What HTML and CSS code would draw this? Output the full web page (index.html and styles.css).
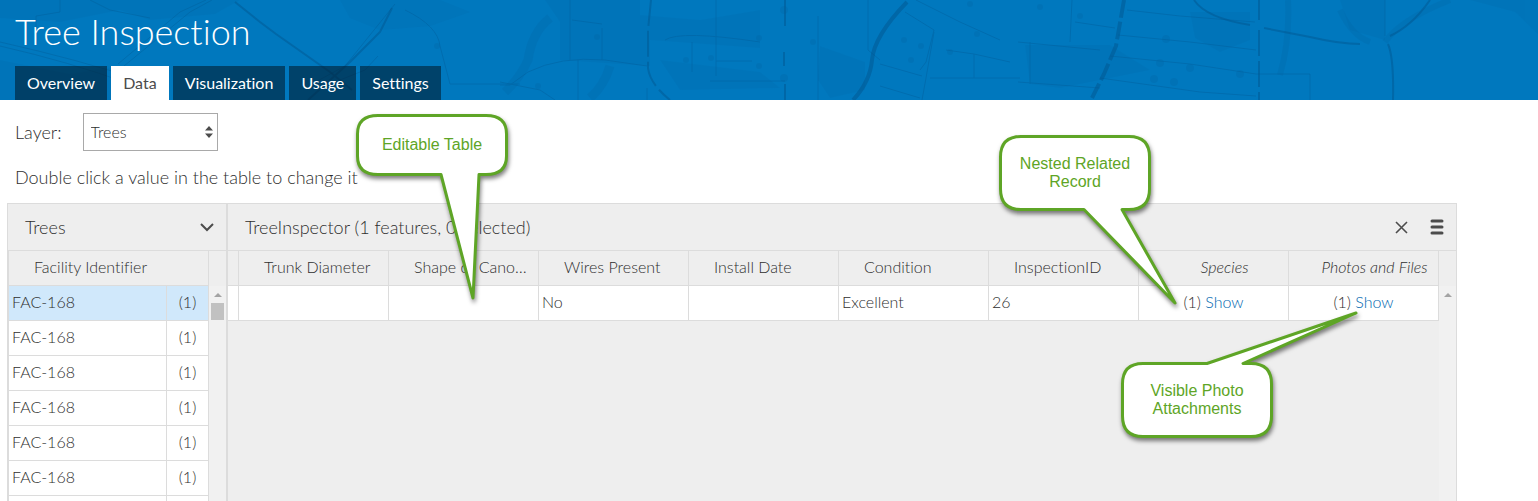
FILE: index.html
```html
<!DOCTYPE html>
<html lang="en">
<head>
    <meta charset="UTF-8">
    <meta name="viewport" content="width=device-width, initial-scale=1.0">
    <title>Tree Inspection</title>
    <link rel="stylesheet" href="styles.css">
</head>
<body>
    <header class="banner">
        <!-- Faint street map behind the title -->
        <svg class="banner-map" viewBox="0 0 1538 100" preserveAspectRatio="none" aria-hidden="true">
            <g fill="#0068a8" opacity="0.2">
                <path d="M0 0H240L215 14L150 20L120 10L60 22L0 18Z"/>
                <path d="M340 0H440L470 12L430 26L380 30L350 18Z"/>
                <path d="M545 0H640V15L700 20L760 10V48L650 40V66L560 60V22Z"/>
                <path d="M660 60L760 72L780 88L680 90Z"/>
                <path d="M820 46L865 62V90L830 98L818 80Z"/>
                <path d="M1025 45H1110L1150 70L1060 88L1030 84Z"/>
                <path d="M1190 12H1250V40L1220 52L1195 38Z"/>
                <path d="M1340 0H1385V40L1350 30Z"/>
                <path d="M1470 0H1538V34L1515 12Z"/>
                <path d="M0 60L70 74L120 66L150 100H0Z"/>
            </g>
            <g fill="none" stroke="#005f9c" opacity="0.18">
                <path stroke-width="9" d="M550 18Q532 32 528 60Q520 78 505 92M610 66Q604 86 590 98"/>
                <path stroke-width="6" d="M1288 0Q1290 40 1280 75M1340 10Q1352 36 1370 42M1385 42Q1400 20 1450 0"/>
            </g>
            <g fill="none" stroke="#005f9c" stroke-width="1" opacity="0.45">
                <path d="M0 42Q80 60 140 80M0 46Q70 62 130 84M118 64L180 12L206 0M124 66L190 12L212 0M60 0V12L36 16V30M90 0L110 10L150 18"/>
                <path d="M405 10Q438 26 440 46L450 84M330 84L365 70L378 56M450 84H520M310 85L345 66L395 4"/>
                <path d="M500 85H510L528 72Q560 56 605 60L647 66M570 0V60M602 28V60M572 20L602 24M578 60V100M665 40Q680 30 760 42M692 42V72M716 0V76M716 61H752M500 82L540 90L555 100M647 100V88M710 81H785"/>
                <path d="M818 16V100M868 0V50L880 60M905 12L934 30L926 62L920 70M934 32L926 78L922 100M880 64L922 76M930 78H1020M916 0L960 22L1000 40M946 50L974 54V78M880 86L920 98M974 54L1010 62"/>
                <path d="M1072 0L1070 42M1075 22L1115 28M1018 42L1100 50M1030 42V84M1127 10L1180 16L1255 22M1118 35L1190 42L1256 50M1110 56L1190 64L1256 74M1100 78L1200 92L1256 96M1256 74H1310V100M1385 0V36M1018 82L1100 88"/>
            </g>
            <g fill="none" stroke="#005791" opacity="0.5">
                <path stroke-width="2" d="M235 2L260 22L276 34L330 72L352 90M392 8L380 32L350 62L308 100"/>
                <path stroke-width="2" d="M651 0L648 30V68Q650 84 670 100M785 0V30M784 52V66M785 84V100M1259 0V20M1259 30V100" stroke-dasharray="26 5"/>
                <path stroke-width="4" d="M907 2Q874 36 872 60Q870 82 853 100"/>
                <path stroke-width="4" d="M1124 0L1116 46L1104 74L1092 98" stroke-dasharray="18 4"/>
                <path stroke-width="2" d="M1194 0Q1206 18 1250 25M1264 28L1310 37Q1340 44 1360 44M1390 36Q1412 26 1430 0M1388 44Q1394 58 1393 100"/>
            </g>
            <g fill="#005f9c" opacity="0.22">
                <circle cx="597" cy="37" r="3"/><circle cx="538" cy="86" r="3"/><circle cx="686" cy="60" r="3"/>
                <circle cx="711" cy="58" r="3"/><circle cx="759" cy="38" r="3"/><circle cx="759" cy="66" r="3"/>
                <circle cx="813" cy="42" r="3"/><circle cx="784" cy="10" r="4"/><circle cx="784" cy="78" r="4"/>
                <circle cx="904" cy="40" r="3"/><circle cx="911" cy="60" r="3"/><circle cx="921" cy="46" r="3"/>
                <circle cx="970" cy="4" r="3"/><circle cx="977" cy="34" r="3"/><circle cx="950" cy="52" r="3"/>
                <circle cx="1040" cy="7" r="3"/><circle cx="1080" cy="16" r="3"/><circle cx="1166" cy="39" r="4"/>
                <circle cx="1160" cy="63" r="4"/><circle cx="1190" cy="68" r="4"/><circle cx="1154" cy="79" r="4"/>
                <circle cx="1174" cy="82" r="4"/><circle cx="1240" cy="74" r="4"/><circle cx="437" cy="46" r="3"/>
            </g>
        </svg>
        <h1 class="title">Tree Inspection</h1>
        <nav class="tabs">
            <a class="tab" href="#overview">Overview</a>
            <a class="tab tab-active" href="#data">Data</a>
            <a class="tab" href="#visualization">Visualization</a>
            <a class="tab" href="#usage">Usage</a>
            <a class="tab" href="#settings">Settings</a>
        </nav>
    </header>

    <main class="content">
        <div class="layer-row">
            <label for="layer">Layer:</label>
            <div class="select-box">
                <select id="layer">
                    <option value="trees">Trees</option>
                </select>
                <svg class="select-arrows" width="8" height="12" viewBox="0 0 8 12" aria-hidden="true"><path d="M0 4.500L4 0L8 4.500ZM0 7.500H8L4 12Z" fill="#4c4c4c"/></svg>
            </div>
        </div>
        <p class="hint">Double click a value in the table to change it</p>

        <div class="panel">
            <section class="pane pane-list">
                <div class="pane-head">
                    <h2>Trees</h2>
                    <button class="icon-button" type="button" aria-label="Choose table">
                        <svg width="14" height="10" viewBox="0 0 14 10"><path d="M1 2L7 8L13 2" fill="none" stroke="#4c4c4c" stroke-width="2"/></svg>
                    </button>
                </div>
                <div class="grid-area">
                    <table class="grid">
                        <colgroup><col><col class="col-count"></colgroup>
                        <thead>
                            <tr><th colspan="2">Facility Identifier</th></tr>
                        </thead>
                        <tbody>
                            <tr class="selected"><td>FAC-168</td><td class="center">(1)</td></tr>
                            <tr><td>FAC-168</td><td class="center">(1)</td></tr>
                            <tr><td>FAC-168</td><td class="center">(1)</td></tr>
                            <tr><td>FAC-168</td><td class="center">(1)</td></tr>
                            <tr><td>FAC-168</td><td class="center">(1)</td></tr>
                            <tr><td>FAC-168</td><td class="center">(1)</td></tr>
                            <tr><td></td><td></td></tr>
                        </tbody>
                    </table>
                    <div class="scrollbar">
                        <span class="scroll-up"></span>
                        <span class="scroll-thumb"></span>
                    </div>
                </div>
            </section>

            <section class="pane pane-records">
                <div class="pane-head">
                    <h2>TreeInspector (1 features, 0 selected)</h2>
                    <div class="pane-tools">
                        <button class="icon-button" type="button" aria-label="Close">
                            <svg width="13" height="13" viewBox="0 0 13 13"><path d="M1 1L12 12M12 1L1 12" fill="none" stroke="#4c4c4c" stroke-width="1.600"/></svg>
                        </button>
                        <button class="icon-button" type="button" aria-label="Menu">
                            <svg width="14" height="16" viewBox="0 0 14 16"><path d="M2 2H12M2 8H12M2 14H12" fill="none" stroke="#4c4c4c" stroke-width="3" stroke-linecap="round"/></svg>
                        </button>
                    </div>
                </div>
                <div class="grid-area">
                    <table class="grid">
                        <colgroup>
                            <col>
                            <col class="col-field"><col class="col-field"><col class="col-field"><col class="col-field">
                            <col class="col-field"><col class="col-field"><col class="col-field"><col class="col-field">
                        </colgroup>
                        <thead>
                            <tr>
                                <td></td>
                                <th>Trunk Diameter</th>
                                <th>Shape of Cano…</th>
                                <th>Wires Present</th>
                                <th>Install Date</th>
                                <th>Condition</th>
                                <th>InspectionID</th>
                                <th class="related">Species</th>
                                <th class="related">Photos and Files</th>
                            </tr>
                        </thead>
                        <tbody>
                            <tr>
                                <td></td>
                                <td></td>
                                <td></td>
                                <td>No</td>
                                <td></td>
                                <td>Excellent</td>
                                <td>26</td>
                                <td class="center">(1) <a href="#species">Show</a></td>
                                <td class="center">(1) <a href="#photos">Show</a></td>
                            </tr>
                        </tbody>
                    </table>
                    <div class="scrollbar">
                        <span class="scroll-up"></span>
                    </div>
                </div>
            </section>
        </div>
    </main>

    <!-- Callouts over the page -->
    <div class="callout callout-table">
        <svg class="callout-shape" width="152" height="190" viewBox="0 0 152 190" aria-hidden="true"><path d="M22 1.500H130Q150.500 1.500 150.500 20V42Q150.500 60.500 130 60.500H123L117 184L85 60.500H22Q1.500 60.500 1.500 42V20Q1.500 1.500 22 1.500Z"/></svg>
        <p class="callout-text">Editable Table</p>
    </div>
    <div class="callout callout-tall callout-related">
        <svg class="callout-shape" width="152" height="190" viewBox="0 0 152 190" aria-hidden="true"><path d="M22 1.500H130Q150.500 1.500 150.500 22V54Q150.500 74.500 130 74.500H123L176 168L85 74.500H22Q1.500 74.500 1.500 54V22Q1.500 1.500 22 1.500Z"/></svg>
        <p class="callout-text">Nested Related Record</p>
    </div>
    <div class="callout callout-tall callout-photos">
        <svg class="callout-shape" width="152" height="190" viewBox="0 0 152 190" aria-hidden="true"><path d="M22 1.500H86L235 -49L122 1.500H130Q150.500 1.500 150.500 22V54Q150.500 74.500 130 74.500H22Q1.500 74.500 1.500 54V22Q1.500 1.500 22 1.500Z"/></svg>
        <p class="callout-text">Visible Photo Attachments</p>
    </div>
</body>
</html>
```
FILE: styles.css
```css
* {
    box-sizing: border-box;
}

body {
    margin: 0;
    height: 100vh;
    display: flex;
    flex-direction: column;
    overflow: hidden;
    background-color: #fff;
    color: #2e2e2e;
    font-family: Lato, "Open Sans", sans-serif;
    font-size: 18px;
    font-variant-ligatures: none;
}

a {
    color: #0068b0;
    text-decoration: none;
}

.banner {
    position: relative;
    padding: 11px 15px 0;
    background-color: #0078be;
    color: #fff;
}

.banner-map {
    position: absolute;
    top: 0;
    left: 0;
    width: 100%;
    height: 100%;
}

.title {
    position: relative;
    margin: 0 0 15px;
    font-size: 36px;
    font-weight: 300;
    line-height: 40px;
}

.tabs {
    position: relative;
    display: flex;
    gap: 4px;
}

.tab {
    padding: 0 12px;
    background-color: rgba(0, 30, 50, 0.6);
    color: #fff;
    font-size: 16px;
    line-height: 34px;
}

.tab-active {
    background-color: #fff;
    color: #4c4c4c;
}

.content {
    flex: 1;
    min-height: 0;
    display: flex;
    flex-direction: column;
    padding: 13px 81px 0 7px;
}

.layer-row {
    display: flex;
    align-items: center;
    gap: 21px;
    padding-left: 8px;
    font-weight: 300;
}

.select-box {
    position: relative;
    width: 135px;
}

.select-box select {
    appearance: none;
    width: 100%;
    height: 38px;
    padding: 0 7px 2px;
    background-color: #fff;
    border: 1px solid #a9a9a9;
    border-radius: 0;
    color: #2e2e2e;
    font: inherit;
    font-size: 16px;
}

.select-arrows {
    position: absolute;
    top: 13px;
    right: 5px;
    pointer-events: none;
}

.hint {
    margin: 14px 0;
    padding-left: 8px;
    font-weight: 300;
    line-height: 24px;
}

.panel {
    flex: 1;
    min-height: 0;
    display: flex;
    border: 1px solid #dcdcdc;
    border-bottom: 0;
    background-color: #eee;
}

.pane {
    display: flex;
    flex-direction: column;
    min-height: 0;
}

.pane-list {
    width: 220px;
    border-right: 2px solid #dcdcdc;
}

.pane-records {
    flex: 1;
    min-width: 0;
}

.pane-head {
    display: flex;
    align-items: center;
    justify-content: space-between;
    height: 47px;
    padding: 0 12px 0 17px;
    border-bottom: 1px solid #dcdcdc;
}

.pane-head h2 {
    margin: 0;
    font-size: 18px;
    font-weight: 300;
}

.pane-tools {
    display: flex;
    align-items: center;
    gap: 22px;
}

.icon-button {
    display: flex;
    padding: 0;
    border: 0;
    background: none;
    cursor: pointer;
}

.grid-area {
    flex: 1;
    min-height: 0;
    display: flex;
    align-items: flex-start;
    overflow: hidden;
}

.pane-list .grid-area {
    border-left: 1px solid #dcdcdc;
}

.grid {
    flex: 1;
    width: 100%;
    min-width: 0;
    table-layout: fixed;
    border-collapse: separate;
    border-spacing: 0;
    font-size: 16px;
    font-weight: 300;
}

.col-count {
    width: 42px;
}

.col-field {
    width: 150px;
}

.grid th,
.grid td {
    height: 35px;
    padding: 0 3px 4px;
    border-right: 1px solid #dcdcdc;
    border-bottom: 1px solid #dcdcdc;
    text-align: left;
    white-space: nowrap;
    overflow: hidden;
    text-overflow: ellipsis;
}

.grid th {
    padding: 0 8px 4px 25px;
    font-weight: 300;
}

.grid th.related {
    padding: 0 2px 4px 24px;
    text-align: center;
    font-style: italic;
}

.grid tbody td {
    background-color: #fff;
}

.grid tbody td.center {
    text-align: center;
}

.grid tbody .selected td {
    background-color: #d0e8fb;
}

.scrollbar {
    align-self: stretch;
    width: 17px;
    margin-top: 35px;
    padding: 7px 2px;
    display: flex;
    flex-direction: column;
    align-items: center;
    gap: 6px;
    background-color: #f1f1f1;
}

.scroll-up {
    border: 4px solid transparent;
    border-top: 0;
    border-bottom-color: #a3a3a3;
}

.scroll-thumb {
    width: 13px;
    height: 17px;
    background-color: #c1c1c1;
}

.callout {
    position: absolute;
    display: flex;
    align-items: center;
    justify-content: center;
    width: 152px;
    height: 62px;
    color: #5ea526;
    font-family: "Liberation Sans", Arial, sans-serif;
    font-size: 16px;
    line-height: 18px;
    text-align: center;
}

.callout-tall {
    height: 76px;
}

.callout-shape {
    position: absolute;
    top: 0;
    left: 0;
    overflow: visible;
    fill: #fff;
    stroke: #5ea526;
    stroke-width: 3;
    stroke-linejoin: round;
    filter: drop-shadow(1px 3px 2px rgba(0, 0, 0, 0.5));
}

.callout-text {
    position: relative;
    width: 120px;
    margin: 0;
}

.callout-table {
    top: 114px;
    left: 356px;
}

.callout-related {
    top: 135px;
    left: 999px;
}

.callout-photos {
    top: 362px;
    left: 1121px;
}
```
